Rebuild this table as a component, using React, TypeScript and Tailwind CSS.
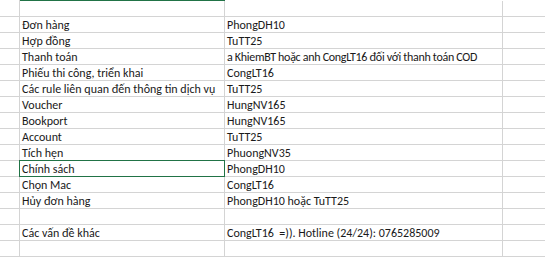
import React from 'react'

const rows: [string, string][] = [
  ['', ''],
  ['Đơn hàng', 'PhongDH10'],
  ['Hợp đồng', 'TuTT25'],
  ['Thanh toán', 'a KhiemBT hoặc anh CongLT16 đối với thanh toán COD'],
  ['Phiếu thi công, triển khai', 'CongLT16'],
  ['Các rule liên quan đến thông tin dịch vụ', 'TuTT25'],
  ['Voucher', 'HungNV165'],
  ['Bookport', 'HungNV165'],
  ['Account', 'TuTT25'],
  ['Tích hẹn', 'PhuongNV35'],
  ['Chính sách', 'PhongDH10'],
  ['Chọn Mac', 'CongLT16'],
  ['Hủy đơn hàng', 'PhongDH10 hoặc TuTT25'],
  ['', ''],
  ['Các vấn đề khác', 'CongLT16  =)). Hotline (24/24): 0765285009'],
  ['', ''],
]

export default function App() {
  return (
    <div className="w-[545px] h-[273px] bg-white overflow-hidden text-[12px] text-[#1a1a1a]" style={{ fontFamily: 'Carlito, Lato, "Liberation Sans", sans-serif' }}>
      {/* top strip with selected column header edge */}
      <div className="flex h-[1px]">
        <div className="w-[20px] border-r border-[#d4d4d4]" />
        <div className="w-[205px] bg-[#217346]" />
        <div className="flex-1" />
      </div>
      {rows.map(([a, b], i) => (
        <div key={i} className="flex h-[16px] border-b border-[#d4d4d4]">
          <div className="w-[20px] shrink-0 border-r border-[#d4d4d4]" />
          <div className={`relative w-[205px] shrink-0 border-r border-[#d4d4d4] pl-[2px] flex items-end leading-[14px] whitespace-pre ${i === 0 ? 'pt-[1px]' : ''}`}>
            {i === 10 && <div className="absolute -left-px -top-px -right-px -bottom-px border border-[#217346]" />}
            {a}
          </div>
          <div className={`w-[278px] shrink-0 border-r border-[#d4d4d4] pl-[2px] flex items-end leading-[14px] whitespace-pre ${i === 3 ? 'tracking-[-0.3px]' : ''}`}>{b}</div>
          <div className="flex-1" />
        </div>
      ))}
    </div>
  )
}
